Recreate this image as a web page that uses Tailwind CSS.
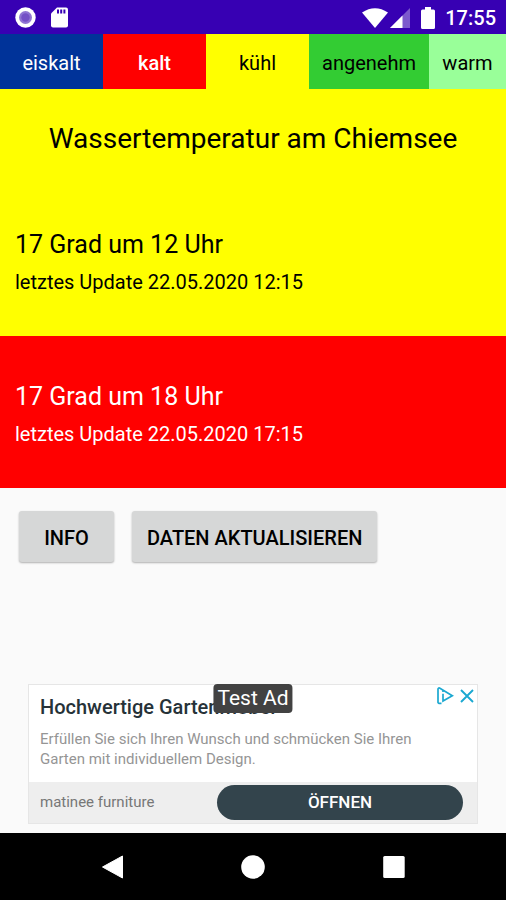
<!DOCTYPE html>
<html lang="de">
<head>
<meta charset="utf-8">
<meta name="viewport" content="width=device-width, initial-scale=1">
<title>Wassertemperatur am Chiemsee</title>
<script src="https://cdn.jsdelivr.net/npm/@tailwindcss/browser@4"></script>
</head>
<body class="flex min-h-screen flex-col bg-[#fafafa] font-[Roboto,sans-serif] text-black">
  <header class="flex h-[34px] shrink-0 items-center justify-between bg-[#3700b3] pt-px pr-[10px] pl-[15px] text-white">
    <div class="flex items-center gap-[15px]">
      <svg class="size-[21px]" viewBox="0 0 21 21" aria-hidden="true"><circle cx="10.500" cy="10.500" r="10.200" fill="#fff"/><circle cx="10.500" cy="10.500" r="6.500" fill="#8f74d3"/><circle cx="10.500" cy="10.500" r="4.200" fill="#7450c6"/></svg>
      <svg class="h-[21px] w-[17px]" viewBox="0 0 17 21" aria-hidden="true"><path fill="#fff" d="M6 0.500h9a2 2 0 0 1 2 2v16a2 2 0 0 1-2 2H2a2 2 0 0 1-2-2V6.500z"/><path fill="#3700b3" d="M6 2.500h2v4H6zM9.200 2.500h2v4h-2zM12.400 2.500h2v4h-2z"/></svg>
    </div>
    <div class="flex items-center">
      <svg class="h-[20px] w-[26px]" viewBox="0 0 26 20" aria-hidden="true"><path fill="#fff" d="M0 4.500Q13-4 26 4.500L13 20z"/></svg>
      <svg class="ml-[2px] h-[20px] w-[20px]" viewBox="0 0 20 20" aria-hidden="true"><path fill="#fff" fill-opacity=".35" d="M20 0v20H0z"/><path fill="#fff" d="M12.500 7.500V20H0z"/></svg>
      <svg class="ml-[11px] h-[22px] w-[14px]" viewBox="0 0 14 22" aria-hidden="true"><path fill="#fff" d="M4 0h6v2.500h2.500A1.500 1.500 0 0 1 14 4v16.500a1.500 1.500 0 0 1-1.500 1.500h-11A1.500 1.500 0 0 1 0 20.500V4a1.500 1.500 0 0 1 1.500-1.500H4z"/></svg>
      <span class="ml-[10px] text-[20px] font-medium">17:55</span>
    </div>
  </header>

  <main class="flex grow flex-col">
    <section class="bg-[#ffff00]">
      <nav class="flex h-[55px] overflow-hidden text-[20px]" aria-label="Temperaturbereiche">
        <button class="min-w-[103px] shrink-0 bg-[#003399] px-[13px] pt-[2px] text-white">eiskalt</button>
        <button class="min-w-[103px] shrink-0 bg-[#ff0000] px-[13px] pt-[2px] font-medium text-white">kalt</button>
        <button class="min-w-[103px] shrink-0 bg-[#ffff00] px-[13px] pt-[2px]">kühl</button>
        <button class="min-w-[103px] shrink-0 bg-[#33cc33] px-[13px] pt-[2px]">angenehm</button>
        <button class="grow bg-[#99ff99] px-[13px] pt-[2px]">warm</button>
      </nav>
      <h1 class="pt-8 text-center text-[28px] leading-9">Wassertemperatur am Chiemsee</h1>
      <div class="px-[15px] pt-[72px] pb-10">
        <h2 class="text-[25px] leading-8">17 Grad um 12 Uhr</h2>
        <p class="pt-[7px] text-[20px] leading-7">letztes Update 22.05.2020 12:15</p>
      </div>
    </section>
    <section class="bg-[#ff0000] px-[15px] pt-[45px] pb-10 text-white">
      <h2 class="text-[25px] leading-8">17 Grad um 18 Uhr</h2>
      <p class="pt-[7px] text-[20px] leading-7">letztes Update 22.05.2020 17:15</p>
    </section>
    <div class="flex gap-[18px] px-[19px] pt-[23px] text-[20px] font-medium">
      <button class="h-[51px] w-[95px] rounded-[3px] bg-[#d6d7d7] pt-[2px] shadow-[0_1px_2px_rgba(0,0,0,0.3)]">INFO</button>
      <button class="h-[51px] rounded-[3px] bg-[#d6d7d7] px-[15px] pt-[2px] shadow-[0_1px_2px_rgba(0,0,0,0.3)]">DATEN AKTUALISIEREN</button>
    </div>

    <aside class="relative mx-7 mt-auto mb-[9px] border border-[#e6e6e6] bg-white" aria-label="Anzeige">
      <div class="px-[11px] pt-[8px] pb-[13px]">
        <h3 class="text-[20px] leading-7 font-medium text-[#263238]">Hochwertige Gartenmöbel</h3>
        <p class="max-w-[400px] pt-[8px] text-[15px] leading-5 text-[#959595]">Erfüllen Sie sich Ihren Wunsch und schmücken Sie Ihren Garten mit individuellem Design.</p>
      </div>
      <div class="flex h-[41px] items-center justify-between bg-[#eeeeee] pr-[14px] pl-[11px]">
        <span class="text-[15px] text-[#777777]">matinee furniture</span>
        <a href="#" class="flex h-[35px] w-[246px] items-center justify-center rounded-full bg-[#33444c] text-[17px] font-medium text-white">ÖFFNEN</a>
      </div>
      <span class="absolute -top-px left-1/2 flex h-[29px] -translate-x-1/2 items-center rounded-[4px] bg-[#424242] px-[4px] pt-px text-[21px] whitespace-nowrap text-white">Test Ad</span>
      <div class="absolute top-[2px] right-[3px] flex gap-[6px]">
        <button aria-label="Datenschutzinformationen" class="h-[18px] w-[17px]"><svg viewBox="0 0 17 18" class="size-full" fill="none" stroke="#1ba8d1" stroke-width="1.700"><path d="M4.500 16.300H2a1 1 0 0 1-1-1V2a1 1 0 0 1 1.500-.9L15.300 8.700 6 14V6.800"/><path d="M6 3.300v1.800"/></svg></button>
        <button aria-label="Anzeige schließen" class="h-[18px] w-[14px]"><svg viewBox="0 0 14 18" class="size-full" fill="none" stroke="#1ba8d1" stroke-width="1.900"><path d="m1 3 12 12M13 3 1 15"/></svg></button>
      </div>
    </aside>
  </main>

  <footer class="flex h-[67px] shrink-0 items-center justify-center gap-[117px] bg-black">
    <button aria-label="Zurück" class="size-6"><svg viewBox="0 0 24 24" class="size-full"><path fill="#fff" stroke="#fff" stroke-linejoin="round" d="M22.500 1v22L2.500 12z"/></svg></button>
    <button aria-label="Startbildschirm" class="size-6"><svg viewBox="0 0 24 24" class="size-full"><circle cx="12" cy="12" r="11.800" fill="#fff"/></svg></button>
    <button aria-label="Letzte Apps" class="size-6"><svg viewBox="0 0 24 24" class="size-full"><rect x="1.200" y="1" width="21.500" height="22" rx="1.500" fill="#fff"/></svg></button>
  </footer>
</body>
</html>
